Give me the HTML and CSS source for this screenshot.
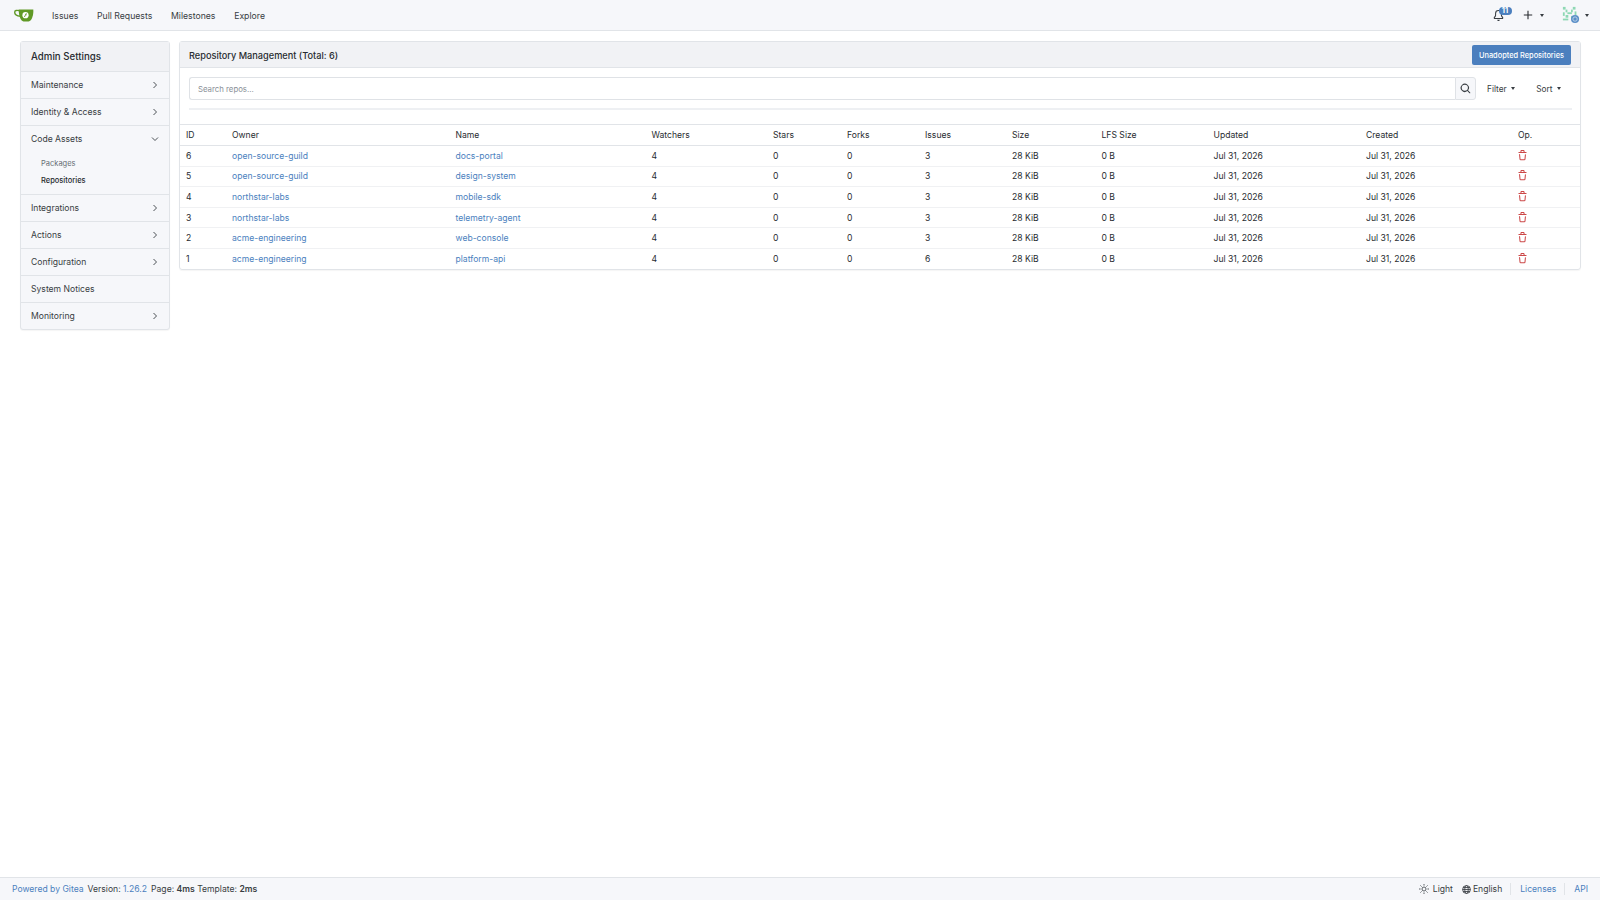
FILE: index.html
```html
<!DOCTYPE html>
<html lang="en">
<head>
    <meta charset="UTF-8">
    <meta name="viewport" content="width=device-width, initial-scale=1.0">
    <title>Repository Management</title>
    <link rel="stylesheet" href="styles.css">
</head>
<body>

    <!-- Shared icons -->
    <svg class="icon-defs">
        <symbol id="trash" viewBox="0 0 16 16">
            <path d="M11 1.75V3h2.25a.75.75 0 0 1 0 1.5H2.75a.75.75 0 0 1 0-1.5H5V1.75C5 .784 5.784 0 6.75 0h2.5C10.216 0 11 .784 11 1.75ZM4.496 6.675l.66 6.6a.25.25 0 0 0 .249.225h5.19a.25.25 0 0 0 .249-.225l.66-6.6a.75.75 0 0 1 1.492.149l-.66 6.6A1.748 1.748 0 0 1 10.595 15h-5.19a1.75 1.75 0 0 1-1.741-1.575l-.66-6.6a.75.75 0 1 1 1.492-.15ZM6.5 1.75V3h3V1.75a.25.25 0 0 0-.25-.25h-2.5a.25.25 0 0 0-.25.25Z"/>
        </symbol>
        <symbol id="chev-right" viewBox="0 0 8 8">
            <path d="M2.5 1l3 3-3 3"/>
        </symbol>
    </svg>

    <!-- Top navigation -->
    <nav class="navbar">
        <a class="logo" href="#">
            <svg width="20" height="14" viewBox="0 0 20 14">
                <path d="M5 2.6C3 2.2.7 2.3.7 4.2c0 2.1 2.4 3.8 5.8 4.1" fill="none" stroke="#609926" stroke-width="1.4"/>
                <path d="M4.6 1.6h14.7c.4 5-1.4 11.9-4.7 11.9H9.5C6.4 13.5 4.8 7 4.6 1.6z" fill="#609926"/>
                <circle cx="11.5" cy="7.2" r="3.1" fill="#fff"/>
                <path d="M10.4 9l2-3.7M11.5 6.3l1.1.6" stroke="#609926" stroke-width=".9" fill="none"/>
            </svg>
        </a>
        <a class="nav-link" href="#">Issues</a>
        <a class="nav-link" href="#">Pull Requests</a>
        <a class="nav-link" href="#">Milestones</a>
        <a class="nav-link" href="#">Explore</a>

        <div class="nav-right">
            <a class="bell" href="#">
                <svg width="11" height="11" viewBox="0 0 16 16" fill="#383d42">
                    <path d="M8 16c.9 0 1.7-.6 1.9-1.5.1-.3-.1-.5-.4-.5h-3c-.3 0-.5.2-.4.5.2.9 1 1.5 1.9 1.5ZM3 5a5 5 0 0 1 10 0v2.947c0 .05.015.098.042.139l1.703 2.555A1.519 1.519 0 0 1 13.482 13H2.518a1.516 1.516 0 0 1-1.263-2.36l1.703-2.554A.255.255 0 0 0 3 7.947Zm5-3.5A3.5 3.5 0 0 0 4.5 5v2.947c0 .346-.102.683-.294.97l-1.703 2.556a.017.017 0 0 0-.003.01l.001.006c0 .002.002.004.004.006l.006.004.007.001h10.964l.007-.001.006-.004.004-.006.001-.007a.017.017 0 0 0-.003-.01l-1.703-2.554a1.745 1.745 0 0 1-.294-.97V5A3.5 3.5 0 0 0 8 1.5Z"/>
                </svg>
                <span class="badge">11</span>
            </a>
            <a class="plus" href="#">
                <svg width="10" height="10" viewBox="0 0 10 10"><path d="M5 .8v8.4M.8 5h8.4" stroke="#282c30" stroke-width="1.1"/></svg>
                <span class="caret"></span>
            </a>
            <a class="avatar-link" href="#">
                <svg width="18" height="18" viewBox="0 0 20 20">
                    <g fill="#8ed8b4">
                        <rect x="1" y="1" width="3" height="3"/><rect x="12" y="1" width="3" height="3"/>
                        <rect x="4" y="4" width="2" height="3"/><rect x="10" y="4" width="2" height="3"/>
                        <rect x="1" y="7" width="2" height="4"/><rect x="6" y="7" width="5" height="2"/>
                        <rect x="14" y="6" width="2" height="4"/><rect x="4" y="10" width="3" height="3"/>
                        <rect x="10" y="11" width="2" height="3"/><rect x="1" y="14" width="6" height="2"/>
                    </g>
                    <circle cx="14.5" cy="14.5" r="4.5" fill="#5b8fc7"/>
                    <circle cx="14.5" cy="14.5" r="2.4" fill="none" stroke="#c9dcef" stroke-width=".9"/>
                </svg>
                <span class="caret"></span>
            </a>
        </div>
    </nav>

    <div class="page">

        <!-- Sidebar -->
        <aside class="sidebar">
            <div class="side-title">Admin Settings</div>
            <div class="side-item">Maintenance<svg class="chev"><use href="#chev-right"/></svg></div>
            <div class="side-item">Identity &amp; Access<svg class="chev"><use href="#chev-right"/></svg></div>
            <div class="side-group">
                <div class="side-item">Code Assets<svg class="chev" viewBox="0 0 8 8"><path d="M1 2.5l3 3 3-3"/></svg></div>
                <div class="side-sub first">Packages</div>
                <div class="side-sub active">Repositories</div>
            </div>
            <div class="side-item">Integrations<svg class="chev"><use href="#chev-right"/></svg></div>
            <div class="side-item">Actions<svg class="chev"><use href="#chev-right"/></svg></div>
            <div class="side-item">Configuration<svg class="chev"><use href="#chev-right"/></svg></div>
            <div class="side-item">System Notices</div>
            <div class="side-item">Monitoring<svg class="chev"><use href="#chev-right"/></svg></div>
        </aside>

        <!-- Main panel -->
        <main class="panel">
            <div class="panel-head">
                <h4>Repository Management (Total: 6)</h4>
                <button class="btn-primary">Unadopted Repositories</button>
            </div>
            <div class="panel-search">
                <div class="search-row">
                    <input class="search-input" type="text" placeholder="Search repos...">
                    <button class="search-btn">
                        <svg width="11" height="11" viewBox="0 0 16 16" fill="#383d42"><path d="M10.68 11.74a6 6 0 0 1-7.922-8.982 6 6 0 0 1 8.982 7.922l3.04 3.04a.749.749 0 0 1-.326 1.275.749.749 0 0 1-.734-.215ZM11.5 7a4.499 4.499 0 1 0-8.997 0A4.499 4.499 0 0 0 11.5 7Z"/></svg>
                    </button>
                    <span class="menu-btn filter">Filter<span class="caret"></span></span>
                    <span class="menu-btn sort">Sort<span class="caret"></span></span>
                </div>
                <div class="divider"></div>
            </div>
            <table class="repo-table">
                <colgroup>
                    <col class="c-id"><col class="c-owner"><col class="c-name"><col class="c-watch"><col class="c-stars">
                    <col class="c-forks"><col class="c-issues"><col class="c-size"><col class="c-lfs"><col class="c-upd">
                    <col class="c-created"><col>
                </colgroup>
                <thead>
                    <tr>
                        <th>ID</th><th>Owner</th><th>Name</th><th>Watchers</th><th>Stars</th><th>Forks</th>
                        <th>Issues</th><th>Size</th><th>LFS Size</th><th>Updated</th><th>Created</th><th>Op.</th>
                    </tr>
                </thead>
                <tbody>
                    <tr>
                        <td>6</td><td><a href="#">open-source-guild</a></td><td><a href="#">docs-portal</a></td>
                        <td>4</td><td>0</td><td>0</td><td>3</td><td>28 KiB</td><td>0 B</td><td>Jul 31, 2026</td><td>Jul 31, 2026</td>
                        <td><svg class="trash"><use href="#trash"/></svg></td>
                    </tr>
                    <tr>
                        <td>5</td><td><a href="#">open-source-guild</a></td><td><a href="#">design-system</a></td>
                        <td>4</td><td>0</td><td>0</td><td>3</td><td>28 KiB</td><td>0 B</td><td>Jul 31, 2026</td><td>Jul 31, 2026</td>
                        <td><svg class="trash"><use href="#trash"/></svg></td>
                    </tr>
                    <tr>
                        <td>4</td><td><a href="#">northstar-labs</a></td><td><a href="#">mobile-sdk</a></td>
                        <td>4</td><td>0</td><td>0</td><td>3</td><td>28 KiB</td><td>0 B</td><td>Jul 31, 2026</td><td>Jul 31, 2026</td>
                        <td><svg class="trash"><use href="#trash"/></svg></td>
                    </tr>
                    <tr>
                        <td>3</td><td><a href="#">northstar-labs</a></td><td><a href="#">telemetry-agent</a></td>
                        <td>4</td><td>0</td><td>0</td><td>3</td><td>28 KiB</td><td>0 B</td><td>Jul 31, 2026</td><td>Jul 31, 2026</td>
                        <td><svg class="trash"><use href="#trash"/></svg></td>
                    </tr>
                    <tr>
                        <td>2</td><td><a href="#">acme-engineering</a></td><td><a href="#">web-console</a></td>
                        <td>4</td><td>0</td><td>0</td><td>3</td><td>28 KiB</td><td>0 B</td><td>Jul 31, 2026</td><td>Jul 31, 2026</td>
                        <td><svg class="trash"><use href="#trash"/></svg></td>
                    </tr>
                    <tr>
                        <td>1</td><td><a href="#">acme-engineering</a></td><td><a href="#">platform-api</a></td>
                        <td>4</td><td>0</td><td>0</td><td>6</td><td>28 KiB</td><td>0 B</td><td>Jul 31, 2026</td><td>Jul 31, 2026</td>
                        <td><svg class="trash"><use href="#trash"/></svg></td>
                    </tr>
                </tbody>
            </table>
        </main>
    </div>

    <footer class="footer">
        <div class="foot-left">
            <a href="#">Powered by Gitea</a>
            <span>Version: <a href="#">1.26.2</a></span>
            <span>Page: <b>4ms</b> Template: <b>2ms</b></span>
        </div>
        <div class="foot-right">
            <span class="foot-item">
                <svg width="10" height="10" viewBox="0 0 16 16" fill="none" stroke="#383d42" stroke-width="1.3"><circle cx="8" cy="8" r="3.2"/><path d="M8 0v2.5M8 13.5V16M0 8h2.5M13.5 8H16M2.3 2.3l1.8 1.8M11.9 11.9l1.8 1.8M2.3 13.7l1.8-1.8M11.9 4.1l1.8-1.8"/></svg>
                Light
            </span>
            <span class="foot-item lang">
                <svg width="9" height="9" viewBox="0 0 16 16" fill="none" stroke="#383d42" stroke-width="1.5"><circle cx="8" cy="8" r="7"/><ellipse cx="8" cy="8" rx="3.2" ry="7"/><path d="M1 8h14M2 4.5h12M2 11.5h12"/></svg>
                English
            </span>
            <a class="foot-link" href="#">Licenses</a>
            <a class="foot-link" href="#">API</a>
        </div>
    </footer>

</body>
</html>
```

FILE: styles.css
```css
* {
    margin: 0;
    padding: 0;
    box-sizing: border-box;
}

body {
    font-family: Inter, "Liberation Sans", sans-serif;
    font-size: 8.6px;
    color: #282c30;
    background-color: #fff;
    height: 900px;
    overflow: hidden;
    display: flex;
    flex-direction: column;
}

a {
    color: #4b7fbe;
    text-decoration: none;
}

.icon-defs {
    display: none;
}

.caret {
    display: inline-block;
    width: 0;
    height: 0;
    border-left: 2.5px solid transparent;
    border-right: 2.5px solid transparent;
    border-top: 3px solid #383d42;
}

/* Navbar */
.navbar {
    height: 31px;
    background-color: #f6f7fa;
    border-bottom: 1px solid #e1e4e8;
    display: flex;
    align-items: center;
    padding-left: 14px;
    flex-shrink: 0;
}

.logo {
    display: flex;
    width: 38px;
}

.nav-link {
    color: #383d42;
    margin-right: 18.7px;
    padding-top: 1.5px;
    font-size: 8.7px;
}

.nav-right {
    margin-left: auto;
    display: flex;
    align-items: center;
    padding-right: 11px;
}

.bell {
    position: relative;
    display: flex;
    margin-right: 19.5px;
}

.badge {
    position: absolute;
    left: 6px;
    top: -3px;
    min-width: 13px;
    height: 8px;
    border-radius: 4px;
    background-color: #4b7fbe;
    color: #fff;
    font-size: 7.5px;
    font-weight: 700;
    line-height: 8px;
    text-align: center;
}

.plus {
    display: flex;
    align-items: center;
    gap: 7px;
    margin-right: 18px;
}

.avatar-link {
    display: flex;
    align-items: center;
    gap: 5px;
}

/* Page layout */
.page {
    flex: 1;
    display: flex;
    align-items: flex-start;
    gap: 9px;
    padding: 10px 19px 0 20px;
}

.sidebar {
    width: 150px;
    flex-shrink: 0;
    background-color: #f6f7fa;
    border: 1px solid #e1e4e8;
    border-radius: 3px;
    box-shadow: 0 1px 1px rgba(0, 0, 0, 0.04);
}

.side-title {
    height: 29px;
    line-height: 29px;
    padding-left: 10px;
    background-color: #f1f2f5;
    font-size: 9.7px;
    font-weight: 500;
}

.side-item {
    height: 27px;
    border-top: 1px solid #e1e4e8;
    padding: 0 10px;
    display: flex;
    align-items: center;
    justify-content: space-between;
    color: #383d42;
    font-size: 8.6px;
}

.side-group {
    padding-bottom: 5px;
}

.side-sub {
    height: 17px;
    line-height: 17px;
    padding-left: 20px;
    color: #666d74;
    font-size: 7.5px;
}

.side-sub.first {
    margin-top: 3px;
}

.side-sub.active {
    color: #282c30;
    font-weight: 500;
}

.chev {
    width: 8px;
    height: 8px;
    fill: none;
    stroke: #383d42;
    stroke-width: 0.9;
}

/* Main panel */
.panel {
    flex: 1;
    border: 1px solid #e1e4e8;
    border-radius: 3px;
    box-shadow: 0 1px 1px rgba(0, 0, 0, 0.04);
}

.panel-head {
    height: 26px;
    background-color: #f1f2f5;
    border-bottom: 1px solid #e1e4e8;
    display: flex;
    align-items: center;
    justify-content: space-between;
    padding: 1px 9px 0;
}

.panel-head h4 {
    font-size: 9.2px;
    font-weight: 500;
}

.btn-primary {
    width: 99px;
    height: 20px;
    background-color: #4b7fbe;
    border: none;
    border-radius: 2px;
    color: #fff;
    font-family: inherit;
    font-size: 7.4px;
    font-weight: 500;
}

.panel-search {
    padding: 9px 8px 0 9px;
    height: 56px;
}

.search-row {
    display: flex;
    align-items: center;
    height: 23px;
}

.search-input {
    flex: 1;
    height: 23px;
    border: 1px solid #dfe2e6;
    border-right: none;
    border-radius: 3px 0 0 3px;
    padding-left: 8px;
    font-family: inherit;
    font-size: 7.8px;
    outline: none;
}

.search-input::placeholder {
    color: #8a9097;
}

.search-btn {
    width: 21px;
    height: 23px;
    border: 1px solid #dfe2e6;
    border-radius: 0 3px 3px 0;
    background-color: #f6f7fa;
    display: flex;
    align-items: center;
    justify-content: center;
}

.menu-btn {
    display: flex;
    align-items: center;
    gap: 4px;
    color: #383d42;
    font-size: 8.3px;
}

.filter {
    margin-left: 11.5px;
}

.sort {
    margin-left: 21.5px;
    margin-right: 11.5px;
}

.divider {
    height: 2px;
    margin-top: 8px;
    background-color: #eef0f3;
}

/* Repo table */
.repo-table {
    width: 100%;
    border-collapse: collapse;
    table-layout: fixed;
}

.c-id { width: 46px; }
.c-owner { width: 223.5px; }
.c-name { width: 196px; }
.c-watch { width: 121.5px; }
.c-stars { width: 74px; }
.c-forks { width: 78px; }
.c-issues { width: 87px; }
.c-size { width: 89.5px; }
.c-lfs { width: 112px; }
.c-upd { width: 152.5px; }
.c-created { width: 152px; }

.repo-table th,
.repo-table td {
    text-align: left;
    padding-left: 6px;
    font-size: 8.6px;
    font-weight: 400;
    vertical-align: middle;
}

.repo-table th {
    height: 21px;
    border-top: 1px solid #e1e4e8;
    border-bottom: 1px solid #e1e4e8;
}

.repo-table td {
    height: 20.6px;
    border-bottom: 1px solid #f0f1f3;
}

.repo-table tbody tr:last-child td {
    border-bottom: none;
}

.trash {
    display: block;
    width: 11px;
    height: 11px;
    margin: -1px 0 0 -1px;
    fill: #cc4848;
}

/* Footer */
.footer {
    height: 23px;
    flex-shrink: 0;
    background-color: #f6f7fa;
    border-top: 1px solid #e1e4e8;
    display: flex;
    align-items: center;
    justify-content: space-between;
    padding: 0 12px;
    font-size: 8.6px;
    color: #383d42;
}

.foot-left {
    display: flex;
    gap: 4px;
}

.foot-left b {
    font-weight: 600;
}

.foot-right {
    display: flex;
    align-items: center;
}

.foot-item {
    display: flex;
    align-items: center;
    gap: 4px;
}

.lang {
    margin-left: 9px;
    gap: 2px;
}

.foot-link {
    margin-left: 8px;
    padding-left: 9px;
    border-left: 1px solid #e1e4e8;
    line-height: 12px;
}
```
